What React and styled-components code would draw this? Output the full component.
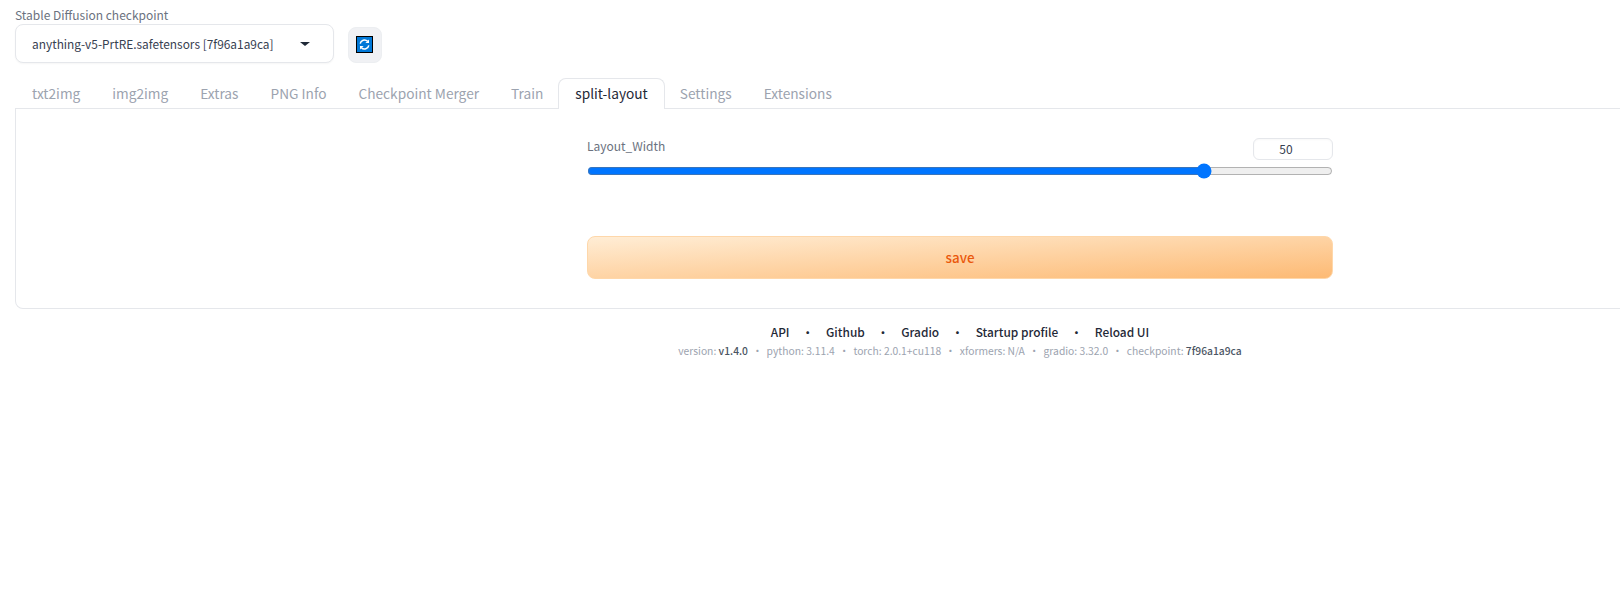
import React from 'react';
import styled, { createGlobalStyle } from 'styled-components';

const GlobalStyle = createGlobalStyle`
  html, body {
    margin: 0;
    padding: 0;
    background: #ffffff;
    overflow: hidden;
  }
  body {
    font-family: "Noto Sans CJK SC", "Noto Sans", sans-serif;
  }
`;

const Page = styled.div`
  width: 1920px;
  box-sizing: border-box;
  padding: 6px 15px 0;
`;

const TopBar = styled.div`
  display: flex;
  align-items: flex-end;
  gap: 14px;
`;

const CheckpointField = styled.div`
  display: flex;
  flex-direction: column;
  width: 319px;
`;

const FieldLabel = styled.label`
  font-size: 12px;
  line-height: 17px;
  padding-bottom: 1px;
  color: #6b7280;
`;

const Dropdown = styled.div`
  box-sizing: border-box;
  height: 39px;
  padding: 0 23px 0 16px;
  display: flex;
  align-items: center;
  justify-content: space-between;
  background: #ffffff;
  border: 1px solid #e5e7eb;
  border-radius: 8px;
  box-shadow: 0 1px 2px rgba(0, 0, 0, 0.04);
  font-size: 11.9px;
  color: #374151;
  white-space: nowrap;
`;

const Caret = styled.span`
  width: 0;
  height: 0;
  border-left: 5px solid transparent;
  border-right: 5px solid transparent;
  border-top: 4px solid #1f2937;
`;

const RefreshButton = styled.button`
  box-sizing: border-box;
  width: 34px;
  height: 36px;
  padding: 0 1px 2px 0;
  display: flex;
  align-items: center;
  justify-content: center;
  background: #f0f1f4;
  border: 1px solid #eceef1;
  border-radius: 8px;
`;

const Tabs = styled.div`
  display: flex;
  margin-top: 15px;
  height: 30px;
  padding-left: 1px;
  border-bottom: 1px solid #e5e7eb;
`;

const Tab = styled.div`
  box-sizing: border-box;
  height: 31px;
  padding: 0 16px;
  margin: 0 -1px;
  font-size: 13.7px;
  line-height: 29px;
  white-space: nowrap;
  color: ${(p) => (p.$active ? '#1f2937' : '#9ca3af')};
  background: ${(p) => (p.$active ? '#ffffff' : 'transparent')};
  border: 1px solid ${(p) => (p.$active ? '#e5e7eb' : 'transparent')};
  border-bottom: none;
  border-radius: 8px 8px 0 0;
`;

const Panel = styled.div`
  box-sizing: border-box;
  height: 200px;
  display: flex;
  justify-content: center;
  padding-top: 29px;
  background: #ffffff;
  border: 1px solid #e5e7eb;
  border-top: none;
  border-radius: 0 0 8px 8px;
`;

const Column = styled.div`
  width: 746px;
  display: flex;
  flex-direction: column;
`;

const SliderHead = styled.div`
  display: flex;
  justify-content: space-between;
  align-items: flex-start;
`;

const SliderLabel = styled.span`
  font-size: 12px;
  line-height: 16px;
  color: #6b7280;
`;

const NumberBox = styled.div`
  box-sizing: border-box;
  width: 80px;
  height: 22px;
  padding-right: 14px;
  text-align: center;
  font-size: 12px;
  line-height: 19px;
  color: #374151;
  border: 1px solid #e5e7eb;
  border-radius: 6px;
  box-shadow: inset 0 1px 2px rgba(0, 0, 0, 0.03);
`;

const Range = styled.input`
  display: block;
  width: 746px;
  height: 16px;
  margin: 3px 0 0;
`;

const SaveButton = styled.button`
  box-sizing: border-box;
  width: 100%;
  height: 43px;
  margin-top: 57px;
  padding-bottom: 3px;
  font-family: inherit;
  font-size: 13.4px;
  font-weight: 500;
  color: #ea580c;
  background: linear-gradient(to bottom right, #ffedd5, #fdba74);
  border: 1px solid #fed7aa;
  border-radius: 8px;
`;

const Footer = styled.div`
  margin-top: 13px;
  display: flex;
  flex-direction: column;
  align-items: center;
`;

const Links = styled.div`
  display: flex;
  font-size: 11.9px;
  font-weight: 500;
  line-height: 20px;
  color: #1f2937;
`;

const LinkDot = styled.span`
  margin: 0 12.3px;
`;

const Versions = styled.div`
  margin-top: 1px;
  font-size: 10.3px;
  line-height: 16px;
  color: #9ca3af;
  white-space: nowrap;
`;

const VersionValue = styled.span`
  color: ${(p) => (p.$strong ? '#4b5563' : 'inherit')};
  font-weight: ${(p) => (p.$strong ? 500 : 400)};
`;

const VersionDot = styled.span`
  margin: 0 4.2px;
`;

const RefreshIcon = () => (
  <svg width="17" height="17" viewBox="0 0 17 17">
    <rect x="0.5" y="0.5" width="16" height="16" fill="#0078d7" stroke="#000000" />
    <path d="M4.2 7.6A4.4 4.4 0 0 1 11.6 5.2" fill="none" stroke="#ffffff" strokeWidth="1.5" />
    <path d="M12.8 9.4A4.4 4.4 0 0 1 5.4 11.8" fill="none" stroke="#ffffff" strokeWidth="1.5" />
    <path d="M13 3.4V7H9.4Z" fill="#ffffff" />
    <path d="M4 13.6V10H7.6Z" fill="#ffffff" />
  </svg>
);

const tabNames = ['txt2img', 'img2img', 'Extras', 'PNG Info', 'Checkpoint Merger', 'Train', 'split-layout', 'Settings', 'Extensions'];
const linkNames = ['API', 'Github', 'Gradio', 'Startup profile', 'Reload UI'];

export default function App() {
  return (
    <Page>
      <GlobalStyle />
      <TopBar>
        <CheckpointField>
          <FieldLabel>Stable Diffusion checkpoint</FieldLabel>
          <Dropdown>
            <span>anything-v5-PrtRE.safetensors [7f96a1a9ca]</span>
            <Caret />
          </Dropdown>
        </CheckpointField>
        <RefreshButton>
          <RefreshIcon />
        </RefreshButton>
      </TopBar>
      <Tabs>
        {tabNames.map((name) => (
          <Tab key={name} $active={name === 'split-layout'}>{name}</Tab>
        ))}
      </Tabs>
      <Panel>
        <Column>
          <SliderHead>
            <SliderLabel>Layout_Width</SliderLabel>
            <NumberBox>50</NumberBox>
          </SliderHead>
          <Range type="range" min="0" max="59.9" step="0.1" defaultValue="50" />
          <SaveButton>save</SaveButton>
        </Column>
      </Panel>
      <Footer>
        <Links>
          {linkNames.map((name, i) => (
            <React.Fragment key={name}>
              {i > 0 && <LinkDot>•</LinkDot>}
              <span>{name}</span>
            </React.Fragment>
          ))}
        </Links>
        <Versions>
          version: <VersionValue $strong>v1.4.0</VersionValue>
          <VersionDot>•</VersionDot>
          python: 3.11.4
          <VersionDot>•</VersionDot>
          torch: 2.0.1+cu118
          <VersionDot>•</VersionDot>
          xformers: N/A
          <VersionDot>•</VersionDot>
          gradio: 3.32.0
          <VersionDot>•</VersionDot>
          checkpoint: <VersionValue $strong>7f96a1a9ca</VersionValue>
        </Versions>
      </Footer>
    </Page>
  );
}
